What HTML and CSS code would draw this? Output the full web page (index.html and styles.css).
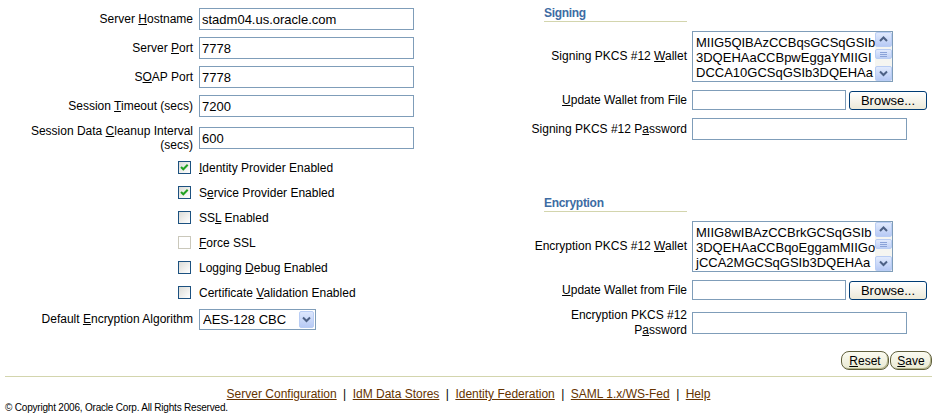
FILE: index.html
```html
<!DOCTYPE html>
<html>
<head>
  <title>Server Configuration</title>
  <link rel="stylesheet" href="styles.css">
</head>
<body>
  <form class="page" onsubmit="return false;">
    <div class="columns">

      <div class="panel left">
        <div class="grid">
          <label class="label" for="host">Server <u>H</u>ostname</label>
          <input class="text" type="text" id="host" value="stadm04.us.oracle.com">

          <label class="label" for="port">Server <u>P</u>ort</label>
          <input class="text" type="text" id="port" value="7778">

          <label class="label" for="soap">S<u>O</u>AP Port</label>
          <input class="text" type="text" id="soap" value="7778">

          <label class="label" for="timeout">Session <u>T</u>imeout (secs)</label>
          <input class="text" type="text" id="timeout" value="7200">

          <label class="label label-wrap" for="cleanup">Session Data <u>C</u>leanup Interval (secs)</label>
          <input class="text" type="text" id="cleanup" value="600">

          <span class="cb checked"><svg width="11" height="11" viewBox="0 0 11 11"><path d="M2 5 L4.3 7.3 L8.7 2.8" fill="none" stroke="#21a121" stroke-width="2"/></svg></span>
          <span class="cb-label"><u>I</u>dentity Provider Enabled</span>

          <span class="cb checked"><svg width="11" height="11" viewBox="0 0 11 11"><path d="M2 5 L4.3 7.3 L8.7 2.8" fill="none" stroke="#21a121" stroke-width="2"/></svg></span>
          <span class="cb-label">S<u>e</u>rvice Provider Enabled</span>

          <span class="cb"></span>
          <span class="cb-label">SS<u>L</u> Enabled</span>

          <span class="cb disabled"></span>
          <span class="cb-label"><u>F</u>orce SSL</span>

          <span class="cb"></span>
          <span class="cb-label">Logging <u>D</u>ebug Enabled</span>

          <span class="cb"></span>
          <span class="cb-label">Certificate <u>V</u>alidation Enabled</span>

          <label class="label" for="algo">Default <u>E</u>ncryption Algorithm</label>
          <span class="select-wrap">
            <select class="select" id="algo">
              <option selected>AES-128 CBC</option>
              <option>AES-192 CBC</option>
              <option>AES-256 CBC</option>
              <option>3DES</option>
            </select>
            <span class="select-btn"><svg width="9" height="7" viewBox="0 0 9 7"><path d="M1 1.5 L4.5 5 L8 1.5" fill="none" stroke="#4d6185" stroke-width="2"/></svg></span>
          </span>
        </div>
      </div>

      <div class="panel right">
        <div class="section">
          <h2 class="header">Signing</h2>
          <div class="grid grid-right">
            <label class="label">Signing PKCS #12 <u>W</u>allet</label>
            <div class="wallet">
              <textarea class="wallet-text" readonly>MIIG5QIBAzCCBqsGCSqGSIb
3DQEHAaCCBpwEggaYMIIGI
DCCA10GCSqGSIb3DQEHAa</textarea>
              <div class="scroll">
                <span class="sb-btn"><svg width="9" height="7" viewBox="0 0 9 7"><path d="M1 5 L4.5 1.5 L8 5" fill="none" stroke="#4d6185" stroke-width="2"/></svg></span>
                <span class="sb-thumb"></span>
                <span class="sb-btn sb-down"><svg width="9" height="7" viewBox="0 0 9 7"><path d="M1 1.5 L4.5 5 L8 1.5" fill="none" stroke="#4d6185" stroke-width="2"/></svg></span>
              </div>
            </div>

            <label class="label"><u>U</u>pdate Wallet from File</label>
            <div class="file-row">
              <input class="text file" type="text">
              <button class="browse" type="button">Browse...</button>
            </div>

            <label class="label">Signing PKCS #12 P<u>a</u>ssword</label>
            <input class="text" type="password">
          </div>
        </div>

        <div class="section section-gap">
          <h2 class="header">Encryption</h2>
          <div class="grid grid-right">
            <label class="label">Encryption PKCS #12 <u>W</u>allet</label>
            <div class="wallet">
              <textarea class="wallet-text" readonly>MIIG8wIBAzCCBrkGCSqGSIb
3DQEHAaCCBqoEggamMIIGo
jCCA2MGCSqGSIb3DQEHAa</textarea>
              <div class="scroll">
                <span class="sb-btn"><svg width="9" height="7" viewBox="0 0 9 7"><path d="M1 5 L4.5 1.5 L8 5" fill="none" stroke="#4d6185" stroke-width="2"/></svg></span>
                <span class="sb-thumb"></span>
                <span class="sb-btn sb-down"><svg width="9" height="7" viewBox="0 0 9 7"><path d="M1 1.5 L4.5 5 L8 1.5" fill="none" stroke="#4d6185" stroke-width="2"/></svg></span>
              </div>
            </div>

            <label class="label"><u>U</u>pdate Wallet from File</label>
            <div class="file-row">
              <input class="text file" type="text">
              <button class="browse" type="button">Browse...</button>
            </div>

            <label class="label">Encryption PKCS #12 P<u>a</u>ssword</label>
            <input class="text" type="password">
          </div>
        </div>
      </div>

    </div>

    <div class="actions">
      <button class="btn" type="reset"><u>R</u>eset</button>
      <button class="btn" type="submit"><u>S</u>ave</button>
    </div>
  </form>

  <div class="footer">
    <div class="links">
      <a href="#">Server Configuration</a><span class="sep">|</span><a href="#">IdM Data Stores</a><span class="sep">|</span><a href="#">Identity Federation</a><span class="sep">|</span><a href="#">SAML 1.x/WS-Fed</a><span class="sep">|</span><a href="#">Help</a>
    </div>
    <div class="copyright">&copy; Copyright 2006, Oracle Corp. All Rights Reserved.</div>
  </div>
</body>
</html>
```

FILE: styles.css
```css
* {
  box-sizing: border-box;
}

body {
  margin: 0;
  font-family: "Liberation Sans", Arial, sans-serif;
  font-size: 12px;
  color: #000000;
  background-color: #ffffff;
}

.columns {
  display: flex;
  align-items: flex-start;
}

.left {
  width: 470px;
  padding: 8px 0 0 5px;
}

.right {
  flex: 1;
  padding: 0 4px 0 52px;
}

.grid {
  display: grid;
  grid-template-columns: 188px auto;
  column-gap: 6px;
  row-gap: 7px;
  align-items: center;
  justify-items: start;
}

.grid-right {
  grid-template-columns: 165px auto;
  column-gap: 5px;
  margin-top: 9px;
}

.label {
  justify-self: stretch;
  text-align: right;
  line-height: 15px;
}

.label-wrap {
  line-height: 14px;
}

.text {
  width: 215px;
  height: 22px;
  border: 1px solid #7f9db9;
  padding: 0 2px;
  font-family: "Liberation Sans", Arial, sans-serif;
  font-size: 13px;
  color: #000000;
  background-color: #ffffff;
  outline: none;
}

/* checkboxes */
.cb {
  justify-self: end;
  width: 13px;
  height: 13px;
  margin: 2px 2px 3px 0;
  border: 1px solid #1c5180;
  background: linear-gradient(135deg, #dcdcd7, #ffffff);
  display: flex;
  align-items: center;
  justify-content: center;
}

.cb.disabled {
  border-color: #cac8bb;
  background: #ffffff;
}

.cb-label {
  line-height: 15px;
}

/* select */
.select-wrap {
  position: relative;
  display: inline-block;
  width: 117px;
  height: 21px;
}

.select {
  appearance: none;
  -webkit-appearance: none;
  width: 117px;
  height: 21px;
  border: 1px solid #7f9db9;
  border-radius: 0;
  padding: 0 0 0 3px;
  font-family: "Liberation Sans", Arial, sans-serif;
  font-size: 13px;
  color: #000000;
  background-color: #ffffff;
  outline: none;
}

.select-btn {
  position: absolute;
  top: 2px;
  right: 2px;
  width: 15px;
  height: 17px;
  border: 1px solid #b9cdf4;
  border-radius: 2px;
  background: linear-gradient(#dde7fd, #b7caf5);
  display: flex;
  align-items: center;
  justify-content: center;
  pointer-events: none;
}

/* right side */
.header {
  margin: 0 0 0 22px;
  width: 143px;
  height: 22px;
  padding-top: 6px;
  border-bottom: 1px solid #d3d5ad;
  font-size: 12px;
  line-height: 15px;
  letter-spacing: -0.3px;
  font-weight: bold;
  color: #3d6ba3;
}

.section-gap {
  margin-top: 50px;
}

.wallet {
  display: flex;
  width: 201px;
  height: 51px;
  border: 1px solid #7f9db9;
  background-color: #ffffff;
}

.wallet-text {
  flex: 1;
  border: none;
  padding: 3px 0 0 3px;
  margin: 0;
  resize: none;
  overflow: hidden;
  white-space: pre;
  font-family: "Liberation Sans", Arial, sans-serif;
  font-size: 13px;
  line-height: 15px;
  color: #000000;
  outline: none;
}

.scroll {
  width: 17px;
  display: flex;
  flex-direction: column;
  background-color: #f5f5f1;
}

.sb-btn {
  height: 15px;
  border: 1px solid #b9cdf4;
  border-radius: 2px;
  background: linear-gradient(#e1eafd, #b7caf5);
  display: flex;
  align-items: center;
  justify-content: center;
}

.sb-down {
  margin-top: auto;
}

.sb-thumb {
  height: 10px;
  margin: 2px 0 0 0;
  border: 1px solid #b9cdf4;
  border-radius: 2px;
  background:
    linear-gradient(#8ba3d8, #8ba3d8) 4px 2px / 7px 1px no-repeat,
    linear-gradient(#8ba3d8, #8ba3d8) 4px 4px / 7px 1px no-repeat,
    linear-gradient(#8ba3d8, #8ba3d8) 4px 6px / 7px 1px no-repeat,
    linear-gradient(#e1eafd, #bfd0f6);
}

.file-row {
  display: flex;
  align-items: center;
  gap: 3px;
  height: 22px;
}

.text.file {
  width: 154px;
  height: 20px;
}

.browse {
  width: 78px;
  height: 19px;
  padding: 0;
  border: 1px solid #003c74;
  border-radius: 3px;
  background: linear-gradient(#ffffff, #ece9d8);
  font-family: "Liberation Sans", Arial, sans-serif;
  font-size: 13px;
  color: #000000;
}

/* bottom buttons */
.actions {
  display: flex;
  justify-content: flex-end;
  gap: 1px;
  margin-top: 13px;
  padding-right: 4px;
}

.btn {
  height: 19px;
  padding: 0 5px;
  border: 1px solid #5f5f3c;
  border-radius: 8px;
  background: linear-gradient(#fbfbf1, #e9e9d2);
  box-shadow: inset -1px -1px 0 #b4b48c;
  font-family: "Liberation Sans", Arial, sans-serif;
  font-size: 12px;
  color: #000000;
}

.btn:first-child {
  width: 48px;
}

.btn:last-child {
  width: 42px;
}

/* footer */
.footer {
  margin: 6px 4px 0 5px;
  border-top: 1px solid #d3d5ad;
}

.links {
  text-align: center;
  margin-top: 10px;
  line-height: 15px;
}

.links a {
  color: #663300;
}

.sep {
  display: inline-block;
  width: 16px;
  text-align: center;
}

.copyright {
  font-size: 10px;
  letter-spacing: -0.2px;
  line-height: 12px;
}
```
